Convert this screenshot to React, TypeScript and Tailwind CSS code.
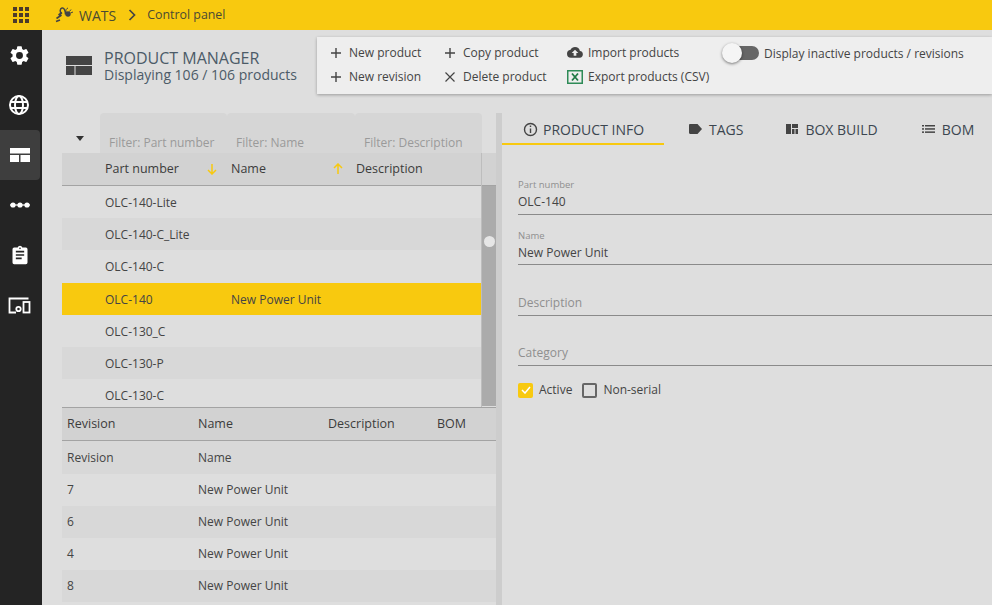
import React from "react";

const Plus = () => (
  <svg width="12" height="12" viewBox="0 0 12 12" className="shrink-0"><path d="M6 1v10M1 6h10" stroke="#444" strokeWidth="1.4" /></svg>
);
const XIcon = () => (
  <svg width="12" height="12" viewBox="0 0 12 12" className="shrink-0"><path d="M1.5 1.5l9 9M10.5 1.5l-9 9" stroke="#444" strokeWidth="1.2" /></svg>
);
const Cloud = () => (
  <svg width="16" height="12" viewBox="0 0 24 18" className="shrink-0"><path fill="#444" d="M19.35 6.04A7.49 7.49 0 0 0 12 0C9.11 0 6.6 1.64 5.35 4.04A6 6 0 0 0 0 10a6 6 0 0 0 6 6h13a5 5 0 0 0 .35-9.96zM14 9v4h-4V9H7l5-5 5 5h-3z" /></svg>
);
const Excel = () => (
  <svg width="16" height="14" viewBox="0 0 16 14" className="shrink-0"><rect x="0.75" y="0.75" width="14.5" height="12.5" fill="none" stroke="#2e8b57" strokeWidth="1.5" /><path d="M5 3.5l6 7M11 3.5l-6 7" stroke="#1f7a45" strokeWidth="1.8" /></svg>
);

const Action = ({ icon, label, gap = "gap-[7px]" }: { icon: React.ReactNode; label: string; gap?: string }) => (
  <div className={`flex items-center ${gap} h-6`}>
    {icon}
    <span className="whitespace-nowrap">{label}</span>
  </div>
);

const NavIcon = ({ children, active }: { children: React.ReactNode; active?: boolean }) => (
  <div className={`w-10 h-[50px] flex items-center justify-center rounded-r ${active ? "bg-[#3e3e3e]" : ""}`}>{children}</div>
);

const Row = ({ a, b, alt, sel }: { a: string; b?: string; alt?: boolean; sel?: boolean }) => (
  <div className={`flex h-[32.2px] items-center pl-[43px] pt-[2px] ${sel ? "bg-[#f8c90f]" : alt ? "bg-[#d8d8d8]" : ""}`}>
    <span className="w-[126px]">{a}</span>
    <span>{b}</span>
  </div>
);

const RevRow = ({ a, alt, h }: { a: string; alt?: boolean; h: string }) => (
  <div className={`flex ${h} items-center pl-[5px] ${alt ? "bg-[#d8d8d8]" : ""}`}>
    <span className="w-[131px]">{a}</span>
    <span>{a === "Revision" ? "Name" : "New Power Unit"}</span>
  </div>
);

const Field = ({ label, value, h, pb = "pb-[3px]", mb = "mb-[1px]" }: { label?: string; value: string; h: string; pb?: string; mb?: string }) => (
  <div className={`${h} border-b border-[#8a8a8a] flex flex-col justify-end ${pb}`}>
    {label && <span className={`text-[9.5px] leading-[12px] text-[#8f8f8f] ${mb}`}>{label}</span>}
    <span className={label ? "leading-[18px]" : "leading-[18px] text-[#8f8f8f]"}>{value}</span>
  </div>
);

const Filter = ({ label, w }: { label: string; w: string }) => (
  <div className={`${w} h-full bg-[#d6d6d6] rounded-t flex items-end pl-[9px] pb-[1px] text-[#9a9a9a] whitespace-nowrap`}>{label}</div>
);

export default function App() {
  return (
    <div className="w-[992px] h-[605px] overflow-hidden flex flex-col bg-[#dedede] text-[#444] text-[12px] font-['Open_Sans','Noto_Sans',sans-serif]">
      <header className="h-[30px] shrink-0 bg-[#f8c90f] flex items-center text-[#4a4a33]">
        <div className="w-[42px] flex justify-center">
          <svg width="16" height="16" viewBox="0 0 16 16" fill="#4d3b2a">
            {[0, 6, 12].flatMap((x) => [0, 6, 12].map((y) => <rect key={`${x}${y}`} x={x} y={y} width="4" height="4" />))}
          </svg>
        </div>
        <svg width="19" height="16" viewBox="0 0 19 16" className="ml-[13px]" fill="none" stroke="#444">
          <path d="M1 14.500l4-1.500M1.500 11.500l5-3.500M3.500 8L7 5.500" strokeWidth="1.700" />
          <path d="M6.500 7C4.500 4.500 5 1.500 7 1c2-.500 3.500 2.500 3.500 6.500" strokeWidth="1.500" />
          <path d="M11 5c-.500-2 .500-3.500 2-4" strokeWidth="1" />
          <circle cx="13" cy="7" r="2.700" fill="#444" stroke="none" />
          <path d="M16 2.500l-1.500 2M18 5l-2.500 1" strokeWidth="1" />
        </svg>
        <span className="ml-[5px] text-[14px]">WATS</span>
        <svg width="9" height="12" viewBox="0 0 9 12" className="ml-[12px]"><path d="M1.500 1l5 5-5 5" fill="none" stroke="#444" strokeWidth="1.700" /></svg>
        <span className="ml-[10px] text-[12.4px] font-medium">Control panel</span>
      </header>

      <div className="flex flex-1 min-h-0">
        <nav className="w-[42px] shrink-0 bg-[#242424] flex flex-col">
          <NavIcon>
            <svg width="23" height="23" viewBox="0 0 24 24" fill="#fff" className="mr-[2px]"><path d="M19.14 12.94c.04-.3.06-.61.06-.94s-.02-.64-.07-.94l2.03-1.58a.5.5 0 0 0 .12-.64l-1.92-3.32a.5.5 0 0 0-.6-.22l-2.39.96a7 7 0 0 0-1.62-.94l-.36-2.54a.5.5 0 0 0-.48-.41h-3.84a.5.5 0 0 0-.48.41l-.36 2.54c-.59.24-1.13.57-1.62.94l-2.39-.96a.5.5 0 0 0-.6.22L2.7 8.84a.5.5 0 0 0 .12.64l2.03 1.58c-.05.3-.09.63-.09.94s.02.64.07.94l-2.03 1.58a.5.5 0 0 0-.12.64l1.92 3.32c.14.24.38.3.6.22l2.39-.96c.5.38 1.03.7 1.62.94l.36 2.54c.05.24.24.41.48.41h3.84c.24 0 .44-.17.47-.41l.36-2.54c.59-.24 1.13-.56 1.62-.94l2.39.96c.22.08.47 0 .59-.22l1.92-3.32a.5.5 0 0 0-.12-.64l-2.01-1.58zM12 15.6A3.6 3.6 0 1 1 12 8.4a3.6 3.6 0 0 1 0 7.2z" /></svg>
          </NavIcon>
          <NavIcon>
            <svg width="22" height="22" viewBox="0 0 22 22" fill="none" stroke="#fff" strokeWidth="2" className="mr-[2px]"><circle cx="11" cy="11" r="9" /><ellipse cx="11" cy="11" rx="4" ry="9" /><path d="M2 8h18M2 14h18" /></svg>
          </NavIcon>
          <NavIcon active>
            <svg width="20" height="14" viewBox="0 0 20 14" fill="#fff"><rect width="20" height="5.500" /><rect y="7" width="9" height="7" /><rect x="10.500" y="7" width="9.500" height="7" /></svg>
          </NavIcon>
          <NavIcon>
            <svg width="20" height="6" viewBox="0 0 20 6" fill="#fff" className="mr-[1px]"><circle cx="3" cy="3" r="2.600" /><circle cx="10" cy="3" r="2.600" /><circle cx="17" cy="3" r="2.600" /><rect y="2.400" width="20" height="1.200" /></svg>
          </NavIcon>
          <NavIcon>
            <svg width="20" height="22" viewBox="0 0 24 24" fill="#fff" className="mr-[1px]"><path d="M19 3h-4.180A3 3 0 0 0 12 1a3 3 0 0 0-2.820 2H5a2 2 0 0 0-2 2v16a2 2 0 0 0 2 2h14a2 2 0 0 0 2-2V5a2 2 0 0 0-2-2zm-7 0a1 1 0 1 1 0 2 1 1 0 0 1 0-2zm2 14H7v-2h7v2zm3-4H7v-2h10v2zm0-4H7V7h10v2z" /></svg>
          </NavIcon>
          <NavIcon>
            <svg width="23" height="17" viewBox="0 0 23 17" fill="none" stroke="#fff" strokeWidth="1.800" className="mr-[2px]"><path d="M8 15.500H1.500V1.500h19" /><rect x="15.500" y="5" width="6" height="10.500" /><circle cx="10.500" cy="12" r="2.200" /></svg>
          </NavIcon>
        </nav>

        <main className="flex-1 min-w-0 flex flex-col">
          <div className="h-[70px] shrink-0 flex">
            <div className="w-[275px] shrink-0 flex items-center pl-[24px]">
              <svg width="26" height="20" viewBox="0 0 26 20" fill="#444" className="mt-[2px]"><rect width="26" height="9" /><rect y="10" width="8.500" height="9" /><rect x="9.500" y="10" width="16.500" height="9" /></svg>
              <div className="ml-[12px] text-[#4c5b68] mt-[2px]">
                <div className="text-[16px] leading-[18px] whitespace-nowrap">PRODUCT MANAGER</div>
                <div className="text-[14px] leading-[16px] whitespace-nowrap">Displaying 106 / 106 products</div>
              </div>
            </div>
            <div className="mt-[7px] h-[57px] flex-1 bg-[#eeeeee] shadow-[0_1px_3px_rgba(0,0,0,0.3)] flex pl-[13px] pt-[4px]">
              <div className="w-[114px]">
                <Action icon={<Plus />} label="New product" />
                <Action icon={<Plus />} label="New revision" />
              </div>
              <div className="w-[123px]">
                <Action icon={<Plus />} label="Copy product" />
                <Action icon={<XIcon />} label="Delete product" />
              </div>
              <div className="w-[155px]">
                <Action icon={<Cloud />} label="Import products" gap="gap-[5px]" />
                <Action icon={<Excel />} label="Export products (CSV)" gap="gap-[5px]" />
              </div>
              <div className="flex items-start gap-[5px] pt-[4px]">
                <div className="relative w-[35px] h-[14px] mt-[1px] ml-[2px] rounded-full bg-[#666]">
                  <div className="absolute left-[-2px] top-[-3px] w-[20px] h-[20px] rounded-full bg-[#f5f5f5] shadow-[0_1px_3px_rgba(0,0,0,0.5)]" />
                </div>
                <span className="whitespace-nowrap">Display inactive products / revisions</span>
              </div>
            </div>
          </div>

          <div className="flex-1 min-h-0 flex pt-[13px]">
            <section className="w-[454px] shrink-0 flex flex-col">
              <div className="h-[40px] shrink-0 flex ml-[20px]">
                <div className="w-[38px] h-full flex items-end justify-center pb-[12px]">
                  <span className="w-0 h-0 border-x-[4px] border-x-transparent border-t-[5px] border-t-[#333] ml-[-2px]" />
                </div>
                <Filter label="Filter: Part number" w="w-[127px]" />
                <Filter label="Filter: Name" w="w-[128px]" />
                <Filter label="Filter: Description" w="w-[127px]" />
              </div>
              <div className="ml-[20px] h-[254px] shrink-0 flex flex-col relative overflow-hidden">
                <div className="h-[33px] shrink-0 bg-[#d2d2d2] border-b border-[#a3a3a3] flex items-center pl-[43px] text-[#3c3c3c] text-[12.5px]">
                  <span className="w-[101px]">Part number</span>
                  <svg width="12" height="12" viewBox="0 0 12 12" fill="none" stroke="#f8c90f" strokeWidth="1.500" className="mr-[13px]"><path d="M6 1v10M2 7l4 4 4-4" /></svg>
                  <span className="w-[101px]">Name</span>
                  <svg width="12" height="12" viewBox="0 0 12 12" fill="none" stroke="#f8c90f" strokeWidth="1.500" className="mr-[12px]"><path d="M6 11V1M2 5l4-4 4 4" /></svg>
                  <span>Description</span>
                </div>
                <div className="flex-1 min-h-0 overflow-hidden pr-[15px]">
                  <Row a="OLC-140-Lite" />
                  <Row a="OLC-140-C_Lite" alt />
                  <Row a="OLC-140-C" />
                  <Row a="OLC-140" b="New Power Unit" sel />
                  <Row a="OLC-130_C" />
                  <Row a="OLC-130-P" alt />
                  <Row a="OLC-130-C" />
                </div>
                <div className="absolute right-0 top-0 w-[15px] h-full border-l border-[#bdbdbd]">
                  <div className="mt-[33px] h-[220px] bg-[#ababab] flex justify-center pt-[50px]">
                    <div className="w-[11px] h-[11px] rounded-full bg-[#e6e6e6]" />
                  </div>
                </div>
              </div>
              <div className="ml-[20px] flex-1 min-h-0 overflow-hidden border-t border-[#a3a3a3]">
                <div className="h-[33px] bg-[#d2d2d2] border-b border-[#a3a3a3] flex items-center pl-[5px] text-[#3c3c3c] text-[12.5px]">
                  <span className="w-[131px]">Revision</span>
                  <span className="w-[130px]">Name</span>
                  <span className="w-[109px]">Description</span>
                  <span>BOM</span>
                </div>
                <RevRow a="Revision" alt h="h-[33px]" />
                <RevRow a="7" h="h-8" />
                <RevRow a="6" alt h="h-8" />
                <RevRow a="4" h="h-8" />
                <RevRow a="8" alt h="h-8" />
              </div>
            </section>

            <div className="w-[6px] shrink-0 bg-[#cdcdcd]" />

            <section className="flex-1 min-w-0 overflow-hidden">
              <div className="h-[32px] flex text-[14px] text-[#3c4650] whitespace-nowrap">
                <div className="w-[162px] h-full border-b-2 border-[#f8c90f] flex items-center pl-[21px] pt-[2px] gap-[5px]">
                  <svg width="15" height="15" viewBox="0 0 15 15" fill="none" stroke="#444" strokeWidth="1.400"><circle cx="7.500" cy="7.500" r="6" /><path d="M7.500 6.500v4.500M7.500 3.500v1.600" /></svg>
                  PRODUCT INFO
                </div>
                <div className="flex items-center gap-[7px] ml-[25px] h-full">
                  <svg width="13" height="10" viewBox="0 0 13 10" fill="#444"><path d="M0 1.200C0 .5.500 0 1.200 0H8.500l4.500 5-4.500 5H1.200C.5 10 0 9.500 0 8.800z" /></svg>
                  TAGS
                </div>
                <div className="flex items-center gap-[7px] ml-[43px] h-full">
                  <svg width="12" height="10" viewBox="0 0 12 10" fill="#444"><rect width="5" height="10" /><rect x="6" width="6" height="4" /><rect x="6" y="5" width="2.500" height="5" /><rect x="9.500" y="5" width="2.500" height="5" /></svg>
                  BOX BUILD
                </div>
                <div className="flex items-center gap-[7px] ml-[44px] h-full">
                  <svg width="13" height="8" viewBox="0 0 13 8" fill="#444"><rect width="2" height="1.500" /><rect y="3.200" width="2" height="1.500" /><rect y="6.400" width="2" height="1.500" /><rect x="3" width="10" height="1.500" /><rect x="3" y="3.200" width="10" height="1.500" /><rect x="3" y="6.400" width="10" height="1.500" /></svg>
                  BOM
                </div>
              </div>
              <div className="pl-[16px] pt-[19px]">
                <Field label="Part number" value="OLC-140" h="h-[51px]" mb="mb-[2px]" />
                <Field label="Name" value="New Power Unit" h="h-[50px]" pb="pb-[2px]" mb="mb-[2px]" />
                <Field value="Description" h="h-[51px]" />
                <Field value="Category" h="h-[50px]" />
                <div className="flex items-center h-[18px] mt-[15px]">
                  <div className="w-[15px] h-[15px] bg-[#f8c90f] rounded-[2px] flex items-center justify-center">
                    <svg width="10" height="8" viewBox="0 0 10 8" fill="none" stroke="#fff" strokeWidth="1.500"><path d="M1 4l3 3 5-6" /></svg>
                  </div>
                  <span className="ml-[6px]">Active</span>
                  <div className="ml-[10px] w-[15px] h-[15px] border-2 border-[#666] rounded-[2px]" />
                  <span className="ml-[6px]">Non-serial</span>
                </div>
              </div>
            </section>
          </div>
        </main>
      </div>
    </div>
  );
}
